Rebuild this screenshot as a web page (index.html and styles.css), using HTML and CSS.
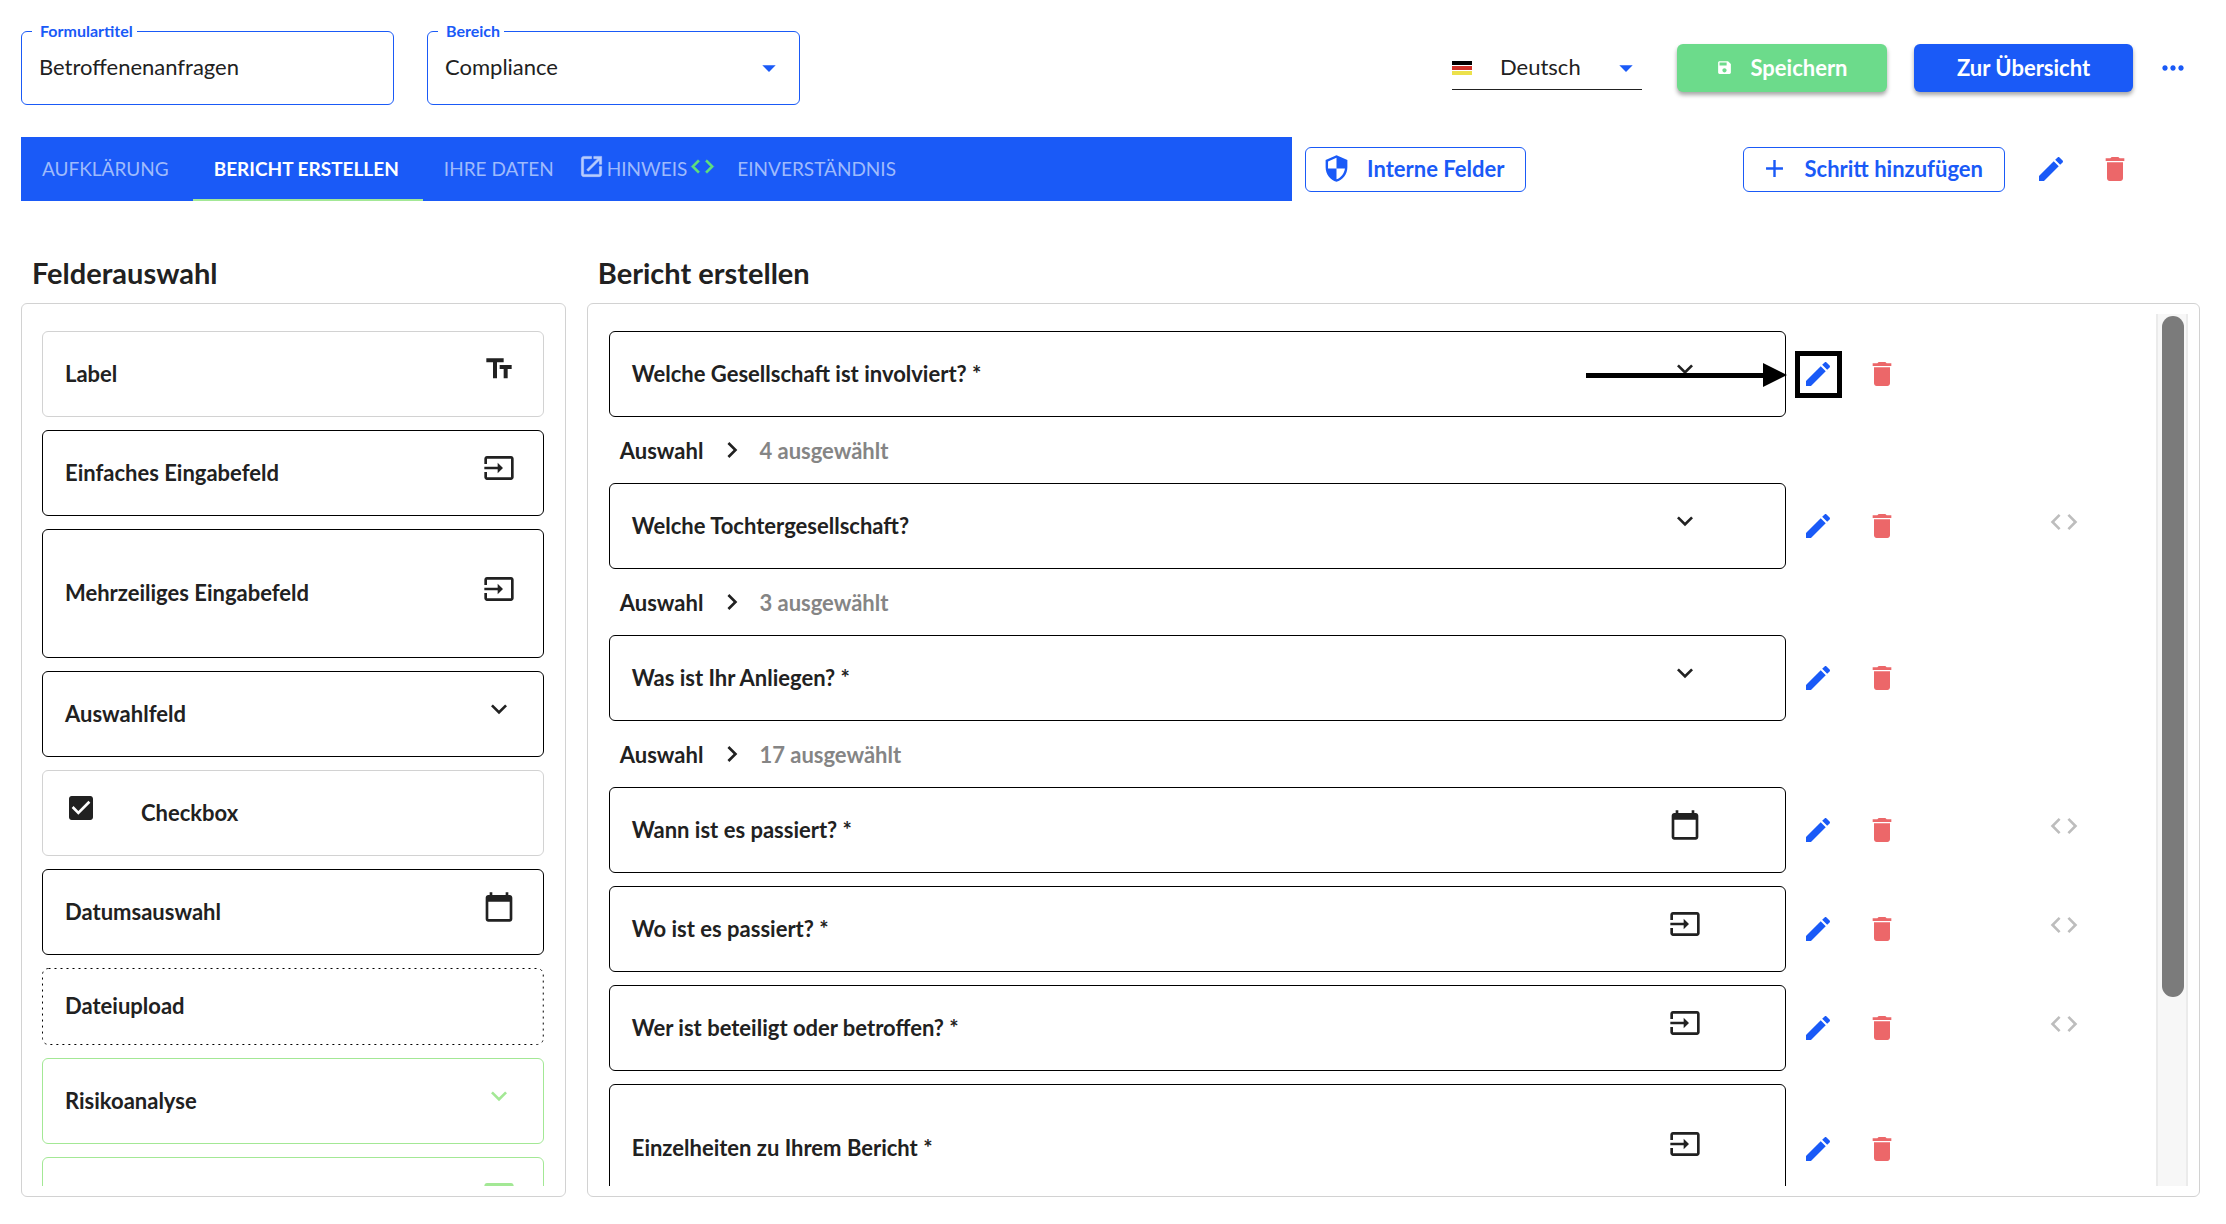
FILE: index.html
```html
<!DOCTYPE html>
<html lang="de">
<head>
<meta charset="utf-8">
<title>Formular bearbeiten</title>
<link rel="stylesheet" href="styles.css">
</head>
<body>
<svg class="sprite" aria-hidden="true">
  <symbol id="i-input" viewBox="0 0 24 24"><path d="M21 3.01H3c-1.1 0-2 .9-2 2V9h2V4.99h18v14.03H3V15H1v4.01c0 1.1.9 1.98 2 1.98h18c1.1 0 2-.88 2-1.98v-14c0-1.11-.9-2-2-2zM11 16l4-4-4-4v3H1v2h10v3z"/></symbol>
  <symbol id="i-down" viewBox="0 0 24 24"><path d="M16.59 8.59L12 13.17 7.41 8.59 6 10l6 6 6-6z"/></symbol>
  <symbol id="i-right" viewBox="0 0 24 24"><path d="M10 6L8.59 7.41 13.17 12l-4.58 4.59L10 18l6-6z"/></symbol>
  <symbol id="i-calendar" viewBox="0 0 24 24"><path d="M20 3h-1V1h-2v2H7V1H5v2H4c-1.1 0-2 .9-2 2v16c0 1.1.9 2 2 2h16c1.1 0 2-.9 2-2V5c0-1.1-.9-2-2-2zm0 18H4V8h16v13z"/></symbol>
  <symbol id="i-text" viewBox="0 0 24 24"><path d="M2.5 4v3h5v12h3V7h5V4h-13zm19 5h-9v3h3v7h3v-7h3V9z"/></symbol>
  <symbol id="i-edit" viewBox="0 0 24 24"><path d="M3 17.25V21h3.75L17.81 9.94l-3.75-3.75L3 17.25zM20.71 7.04c.39-.39.39-1.02 0-1.41l-2.34-2.34c-.39-.39-1.02-.39-1.41 0l-1.83 1.83 3.75 3.75 1.83-1.83z"/></symbol>
  <symbol id="i-delete" viewBox="0 0 24 24"><path d="M6 19c0 1.1.9 2 2 2h8c1.1 0 2-.9 2-2V7H6v12zM19 4h-3.5l-1-1h-5l-1 1H5v2h14V4z"/></symbol>
  <symbol id="i-code" viewBox="0 0 24 24"><path d="M9.4 16.6L4.8 12l4.6-4.6L8 6l-6 6 6 6 1.4-1.4zm5.2 0l4.6-4.6-4.6-4.6L16 6l6 6-6 6-1.4-1.4z"/></symbol>
  <symbol id="i-open" viewBox="0 0 24 24"><path d="M19 19H5V5h7V3H5c-1.11 0-2 .9-2 2v14c0 1.1.89 2 2 2h14c1.1 0 2-.9 2-2v-7h-2v7zM14 3v2h3.59l-9.83 9.83 1.41 1.41L19 6.41V10h2V3h-7z"/></symbol>
  <symbol id="i-shield" viewBox="0 0 24 24"><path d="M12 1L3 5v6c0 5.55 3.84 10.74 9 12 5.16-1.26 9-6.45 9-12V5l-9-4zm0 10.99h7c-.53 4.12-3.28 7.79-7 8.94V12H5V6.3l7-3.11v8.8z"/></symbol>
  <symbol id="i-save" viewBox="0 0 24 24"><path d="M17 3H5c-1.11 0-2 .9-2 2v14c0 1.1.89 2 2 2h14c1.1 0 2-.9 2-2V7l-4-4zm-5 16c-1.66 0-3-1.34-3-3s1.34-3 3-3 3 1.34 3 3-1.34 3-3 3zm3-10H5V5h10v4z"/></symbol>
  <symbol id="i-more" viewBox="0 0 24 24"><path d="M6 10c-1.1 0-2 .9-2 2s.9 2 2 2 2-.9 2-2-.9-2-2-2zm12 0c-1.1 0-2 .9-2 2s.9 2 2 2 2-.9 2-2-.9-2-2-2zm-6 0c-1.1 0-2 .9-2 2s.9 2 2 2 2-.9 2-2-.9-2-2-2z"/></symbol>
  <symbol id="i-plus" viewBox="0 0 24 24"><path d="M19 13h-6v6h-2v-6H5v-2h6V5h2v6h6v2z"/></symbol>
  <symbol id="i-caret" viewBox="0 0 24 24"><path d="M7 10l5 5 5-5z"/></symbol>
  <symbol id="i-card" viewBox="0 0 24 24"><path d="M21 3H3c-1.100 0-2 .9-2 2v14c0 1.100.9 2 2 2h18c1.100 0 2-.9 2-2V5c0-1.100-.9-2-2-2z"/></symbol>
</svg>

<header class="topbar">
  <fieldset class="field">
    <legend><label for="titel">Formulartitel</label></legend>
    <input id="titel" type="text" value="Betroffenenanfragen">
  </fieldset>
  <fieldset class="field">
    <legend><label for="bereich">Bereich</label></legend>
    <select id="bereich"><option>Compliance</option></select>
    <svg class="icon caret"><use href="#i-caret"/></svg>
  </fieldset>
  <div class="topbar-actions">
    <div class="language">
      <svg class="flag" viewBox="0 0 20 14" aria-hidden="true"><path fill="#000" d="M0 0h20v4H0z"/><path fill="#d03027" d="M0 5h20v4H0z"/><path fill="#ece14b" d="M0 10h20v4H0z"/></svg>
      <select aria-label="Sprache"><option>Deutsch</option></select>
      <svg class="icon caret"><use href="#i-caret"/></svg>
    </div>
    <button class="btn btn-save" type="button"><svg class="icon"><use href="#i-save"/></svg>Speichern</button>
    <button class="btn btn-primary" type="button">Zur Übersicht</button>
    <button class="icon-btn more" type="button" aria-label="Mehr"><svg class="icon"><use href="#i-more"/></svg></button>
  </div>
</header>

<div class="steps">
  <nav class="tabs">
    <button type="button" class="tab">AUFKLÄRUNG</button>
    <button type="button" class="tab active">BERICHT ERSTELLEN</button>
    <button type="button" class="tab">IHRE DATEN</button>
    <button type="button" class="tab tab-icons"><svg class="icon open"><use href="#i-open"/></svg>HINWEIS<svg class="icon green"><use href="#i-code"/></svg></button>
    <button type="button" class="tab">EINVERSTÄNDNIS</button>
  </nav>
  <div class="step-actions">
    <button class="btn btn-outline" type="button"><svg class="icon"><use href="#i-shield"/></svg>Interne Felder</button>
    <button class="btn btn-outline push" type="button"><svg class="icon"><use href="#i-plus"/></svg>Schritt hinzufügen</button>
    <button class="icon-btn edit" type="button" aria-label="Schritt bearbeiten"><svg class="icon"><use href="#i-edit"/></svg></button>
    <button class="icon-btn delete" type="button" aria-label="Schritt löschen"><svg class="icon"><use href="#i-delete"/></svg></button>
  </div>
</div>

<main class="columns">
  <section class="column palette">
    <h2>Felderauswahl</h2>
    <div class="panel">
      <div class="list">
        <div class="card light">Label<svg class="icon"><use href="#i-text"/></svg></div>
        <div class="card">Einfaches Eingabefeld<svg class="icon"><use href="#i-input"/></svg></div>
        <div class="card tall">Mehrzeiliges Eingabefeld<svg class="icon"><use href="#i-input"/></svg></div>
        <div class="card">Auswahlfeld<svg class="icon"><use href="#i-down"/></svg></div>
        <label class="card light check"><input type="checkbox" checked>Checkbox</label>
        <div class="card">Datumsauswahl<svg class="icon"><use href="#i-calendar"/></svg></div>
        <div class="card dotted">Dateiupload<svg class="dots" aria-hidden="true"><rect rx="6"/></svg></div>
        <div class="card risk">Risikoanalyse<svg class="icon"><use href="#i-down"/></svg></div>
        <div class="card risk"><svg class="icon"><use href="#i-card"/></svg></div>
      </div>
    </div>
  </section>

  <section class="column form">
    <h2>Bericht erstellen</h2>
    <div class="panel">
      <div class="list">
        <div class="row">
          <div class="card">Welche Gesellschaft ist involviert? *<svg class="icon"><use href="#i-down"/></svg>
            <svg class="pointer" viewBox="0 0 201 24" aria-hidden="true"><path d="M0 10h177V0l24 12-24 12V15H0z"/></svg>
          </div>
          <button class="icon-btn edit marked" type="button" aria-label="Bearbeiten"><svg class="icon"><use href="#i-edit"/></svg></button>
          <button class="icon-btn delete" type="button" aria-label="Löschen"><svg class="icon"><use href="#i-delete"/></svg></button>
        </div>
        <div class="choices">Auswahl<svg class="icon"><use href="#i-right"/></svg><span>4 ausgewählt</span></div>
        <div class="row">
          <div class="card">Welche Tochtergesellschaft?<svg class="icon"><use href="#i-down"/></svg></div>
          <button class="icon-btn edit" type="button" aria-label="Bearbeiten"><svg class="icon"><use href="#i-edit"/></svg></button>
          <button class="icon-btn delete" type="button" aria-label="Löschen"><svg class="icon"><use href="#i-delete"/></svg></button>
          <button class="icon-btn code" type="button" aria-label="Bedingung"><svg class="icon"><use href="#i-code"/></svg></button>
        </div>
        <div class="choices">Auswahl<svg class="icon"><use href="#i-right"/></svg><span>3 ausgewählt</span></div>
        <div class="row">
          <div class="card">Was ist Ihr Anliegen? *<svg class="icon"><use href="#i-down"/></svg></div>
          <button class="icon-btn edit" type="button" aria-label="Bearbeiten"><svg class="icon"><use href="#i-edit"/></svg></button>
          <button class="icon-btn delete" type="button" aria-label="Löschen"><svg class="icon"><use href="#i-delete"/></svg></button>
        </div>
        <div class="choices">Auswahl<svg class="icon"><use href="#i-right"/></svg><span>17 ausgewählt</span></div>
        <div class="row">
          <div class="card">Wann ist es passiert? *<svg class="icon"><use href="#i-calendar"/></svg></div>
          <button class="icon-btn edit" type="button" aria-label="Bearbeiten"><svg class="icon"><use href="#i-edit"/></svg></button>
          <button class="icon-btn delete" type="button" aria-label="Löschen"><svg class="icon"><use href="#i-delete"/></svg></button>
          <button class="icon-btn code" type="button" aria-label="Bedingung"><svg class="icon"><use href="#i-code"/></svg></button>
        </div>
        <div class="row">
          <div class="card">Wo ist es passiert? *<svg class="icon"><use href="#i-input"/></svg></div>
          <button class="icon-btn edit" type="button" aria-label="Bearbeiten"><svg class="icon"><use href="#i-edit"/></svg></button>
          <button class="icon-btn delete" type="button" aria-label="Löschen"><svg class="icon"><use href="#i-delete"/></svg></button>
          <button class="icon-btn code" type="button" aria-label="Bedingung"><svg class="icon"><use href="#i-code"/></svg></button>
        </div>
        <div class="row">
          <div class="card">Wer ist beteiligt oder betroffen? *<svg class="icon"><use href="#i-input"/></svg></div>
          <button class="icon-btn edit" type="button" aria-label="Bearbeiten"><svg class="icon"><use href="#i-edit"/></svg></button>
          <button class="icon-btn delete" type="button" aria-label="Löschen"><svg class="icon"><use href="#i-delete"/></svg></button>
          <button class="icon-btn code" type="button" aria-label="Bedingung"><svg class="icon"><use href="#i-code"/></svg></button>
        </div>
        <div class="row">
          <div class="card tall">Einzelheiten zu Ihrem Bericht *<svg class="icon"><use href="#i-input"/></svg></div>
          <button class="icon-btn edit" type="button" aria-label="Bearbeiten"><svg class="icon"><use href="#i-edit"/></svg></button>
          <button class="icon-btn delete" type="button" aria-label="Löschen"><svg class="icon"><use href="#i-delete"/></svg></button>
        </div>
      </div>
      <div class="scrollbar"><div class="thumb"></div></div>
    </div>
  </section>
</main>
</body>
</html>
```
FILE: styles.css
```css
:root {
  --blue: #1a5af7;
  --green: #6cdb8b;
  --light-green: #a3e895;
  --red: #ec6769;
  --ink: #212121;
  --line: #d2d2d2;
}

*, *::before { box-sizing: border-box; }

body {
  display: flex;
  flex-direction: column;
  height: 100vh;
  margin: 0;
  padding: 22px 26px 27px 21px;
  overflow: hidden;
  background: #fff;
  color: var(--ink);
  font-family: Lato, "Open Sans", sans-serif;
  font-size: 22px;
}

button, input, select { font: inherit; color: inherit; }
button { border: 0; background: none; padding: 0; cursor: pointer; }

.sprite { position: absolute; width: 0; height: 0; }
.icon { flex: none; width: 32px; height: 32px; fill: currentColor; }

/* Top bar */
.topbar { display: flex; gap: 33px; }

.field {
  position: relative;
  width: 373px;
  height: 83px;
  min-width: 0;
  margin: 0;
  padding: 0 15px;
  border: 1px solid var(--blue);
  border-radius: 6px;
}
.field legend {
  margin-left: -5px;
  padding: 0 4px 0 8px;
  color: var(--blue);
  font-size: 16px;
  font-weight: 700;
  line-height: 18px;
}
.field input, .field select {
  width: 100%;
  height: 54px;
  padding: 0 2px 2px;
  border: 0;
  outline: 0;
  background: none;
  appearance: none;
}
.caret { position: absolute; right: 14px; color: var(--blue); pointer-events: none; }
.field .caret { bottom: 20px; }

.topbar-actions { display: flex; align-items: center; margin-left: auto; height: 92px; }

.language {
  position: relative;
  display: flex;
  align-items: center;
  width: 190px;
  height: 44px;
  margin-right: 35px;
  border-bottom: 1px solid var(--ink);
}
.flag { width: 20px; height: 14px; margin-right: 28px; }
.language select { flex: 1; border: 0; background: none; appearance: none; padding: 0 0 2px; }
.language .caret { right: 0; }

.btn {
  display: flex;
  align-items: center;
  justify-content: center;
  border-radius: 6px;
  font-weight: 700;
}
.btn-save, .btn-primary {
  height: 48px;
  padding-bottom: 2px;
  color: #fff;
  box-shadow: 0 3px 4px rgba(0, 0, 0, .35);
}
.btn-save { width: 210px; gap: 17px; margin-right: 27px; background: var(--green); }
.btn-save .icon { width: 17px; height: 17px; }
.btn-primary { width: 219px; background: var(--blue); }

/* Step tabs */
.steps { display: grid; grid-template-columns: 7fr 5fr; margin-top: 23px; }
.tabs { display: flex; height: 64px; background: var(--blue); }
.tab {
  display: flex;
  align-items: center;
  padding: 0 24px 2px 21px;
  color: #9fbafc;
  font-size: 19px;
}
.tab.active { color: #fff; font-weight: 700; box-shadow: inset 0 -2px var(--light-green); }
.tab-icons { padding: 0 0 2px; gap: 2px; }
.tab-icons .icon { width: 27px; height: 27px; margin-bottom: 4px; }
.open { color: #b8ccfd; stroke: currentColor; stroke-width: .5; }
.green { color: #5fe07c; stroke: currentColor; stroke-width: .5; }

.step-actions { display: flex; align-items: center; padding: 0 53px 0 13px; }
.btn-outline {
  height: 45px;
  gap: 16px;
  padding: 0 21px 1px 16px;
  border: 1px solid var(--blue);
  color: var(--blue);
}
.btn-outline .icon { width: 29px; height: 29px; }
.push { margin-left: auto; margin-right: 14px; }

.icon-btn {
  display: flex;
  align-items: center;
  justify-content: center;
  flex: none;
  width: 64px;
}
.more { width: 32px; margin: 0 11px 0 24px; color: var(--blue); }
.edit { color: var(--blue); }
.delete { color: var(--red); }

/* Columns */
.columns { display: flex; gap: 21px; flex: 1; min-height: 0; margin-top: 48px; }
.column { display: flex; flex-direction: column; min-width: 0; }
.palette { flex: 0 0 25%; }
.form { flex: 1; }

h2 { margin: 0; padding: 0 0 6px 11px; font-size: 29px; font-weight: 700; line-height: 48px; }

.panel {
  display: flex;
  flex: 1;
  min-height: 0;
  padding: 10px 11px;
  border: 1px solid var(--line);
  border-radius: 6px;
}
.list {
  display: flex;
  flex-direction: column;
  flex: 1;
  gap: 13px;
  overflow: hidden;
  padding: 17px 10px 0 9px;
}
.form .list { padding: 17px 0 0 10px; }

.card {
  display: flex;
  position: relative;
  align-items: center;
  justify-content: space-between;
  flex: none;
  height: 86px;
  padding: 0 28px 2px 22px;
  border: 1px solid #000;
  border-radius: 6px;
  font-weight: 700;
}
.card > .icon { margin-bottom: 8px; }
.tall { height: 129px; }
.light { border-color: var(--line); }
.risk { border-color: var(--light-green); }
.risk .icon { margin-left: auto; color: var(--light-green); }

.dotted { height: 77px; border-color: transparent; }
.dots { position: absolute; inset: -1px; width: calc(100% + 2px); height: calc(100% + 2px); }
.dots rect {
  x: 0.5px;
  y: 0.5px;
  width: calc(100% - 1px);
  height: calc(100% - 1px);
  fill: none;
  stroke: #000;
  stroke-dasharray: 2 4;
}

.check { justify-content: flex-start; gap: 44px; }
.check input {
  width: 32px;
  height: 32px;
  margin: 0 0 8px;
  appearance: none;
  background: url("data:image/svg+xml,%3Csvg xmlns='http://www.w3.org/2000/svg' viewBox='0 0 24 24'%3E%3Cpath fill='%23212121' d='M19 3H5c-1.110 0-2 .9-2 2v14c0 1.100.89 2 2 2h14c1.110 0 2-.9 2-2V5c0-1.100-.89-2-2-2zm-9 14l-5-5 1.410-1.410L10 14.170l7.590-7.590L19 8l-9 9z'/%3E%3C/svg%3E") center / contain;
}

/* Form rows */
.row { display: flex; flex: none; }
.row .card { width: 76.1%; padding-right: 84px; }
.code { margin: 0 60px 8px auto; color: #bdbdbd; }

.choices {
  display: flex;
  align-items: center;
  flex: none;
  height: 66px;
  margin: -13px 0;
  padding-left: 11px;
  font-weight: 700;
}
.choices .icon { margin: 0 11px 0 13px; }
.choices span { color: #858585; }

/* Callout on the first field */
.marked::before {
  content: "";
  position: absolute;
  width: 47px;
  height: 47px;
  border: 5px solid #000;
}
.pointer { position: absolute; right: -2px; top: 31px; width: 201px; height: 24px; }

/* Scroll track */
.scrollbar {
  flex: none;
  width: 32px;
  padding: 2px 4px;
  border: solid #ebebeb;
  border-width: 0 2px;
  background: #f7f7f7;
}
.thumb { width: 22px; height: 78.5%; border-radius: 11px; background: #7b7b7b; }
```
